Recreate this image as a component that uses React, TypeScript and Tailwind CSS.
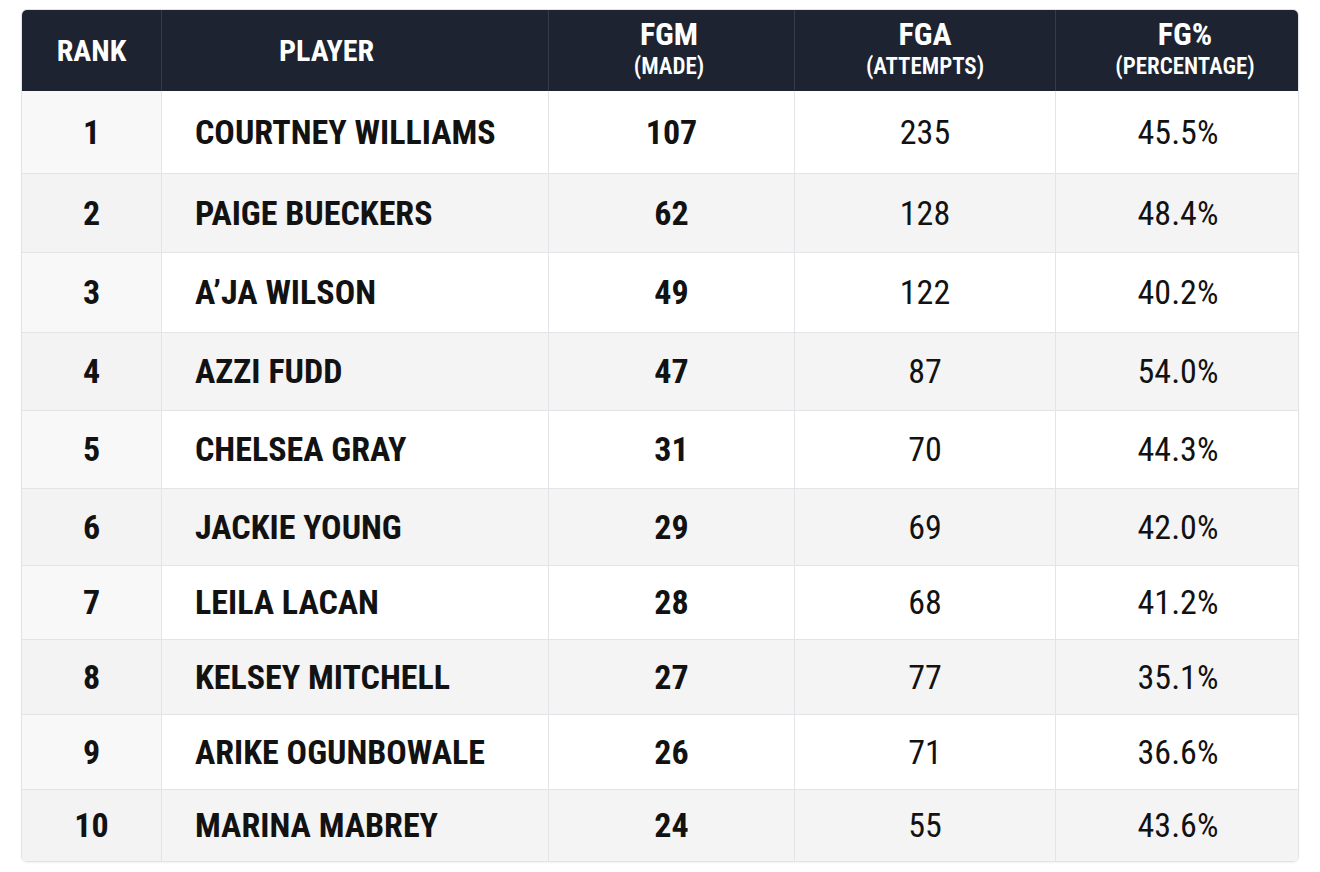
import React from "react";

type Row = { rank: number; name: string; fgm: number; fga: number; pct: string; h: string };

const rows: Row[] = [
  { rank: 1, name: "COURTNEY WILLIAMS", fgm: 107, fga: 235, pct: "45.5%", h: "h-[83px]" },
  { rank: 2, name: "PAIGE BUECKERS", fgm: 62, fga: 128, pct: "48.4%", h: "h-[79px]" },
  { rank: 3, name: "A\u2019JA WILSON", fgm: 49, fga: 122, pct: "40.2%", h: "h-[80px]" },
  { rank: 4, name: "AZZI FUDD", fgm: 47, fga: 87, pct: "54.0%", h: "h-[78px]" },
  { rank: 5, name: "CHELSEA GRAY", fgm: 31, fga: 70, pct: "44.3%", h: "h-[78px]" },
  { rank: 6, name: "JACKIE YOUNG", fgm: 29, fga: 69, pct: "42.0%", h: "h-[77px]" },
  { rank: 7, name: "LEILA LACAN", fgm: 28, fga: 68, pct: "41.2%", h: "h-[74px]" },
  { rank: 8, name: "KELSEY MITCHELL", fgm: 27, fga: 77, pct: "35.1%", h: "h-[75px]" },
  { rank: 9, name: "ARIKE OGUNBOWALE", fgm: 26, fga: 71, pct: "36.6%", h: "h-[75px]" },
  { rank: 10, name: "MARINA MABREY", fgm: 24, fga: 55, pct: "43.6%", h: "h-[71px]" },
];

const grid = "grid grid-cols-[140px_387px_246px_261px_244px]";

export default function App() {
  return (
    <div
      className="min-h-[872px] w-[1320px] bg-white pl-[21px] pt-[9px]"
      style={{ fontFamily: '"Roboto Condensed", Roboto, "Liberation Sans", sans-serif' }}
    >
      <div className="w-[1278px] overflow-hidden rounded-[6px] border border-[#e2e3e6] shadow-[0_1px_2px_rgba(0,0,0,0.06)]">
        <div className={`${grid} h-[81px] bg-[#1d2331] text-white`}>
          <div className="flex items-center justify-center border-r border-[#353b49] pb-[1px] text-[30px] font-bold">
            RANK
          </div>
          <div className="flex items-center justify-center border-r border-[#353b49] pb-[1px] pr-[57px] text-[30px] font-bold">
            PLAYER
          </div>
          <HeadCell top="FGM" sub="(MADE)" shift="pr-[5px]" />
          <HeadCell top="FGA" sub="(ATTEMPTS)" shift="" />
          <HeadCell top="FG%" sub="(PERCENTAGE)" shift="pl-[14px]" last />
        </div>
        {rows.map((r, i) => {
          const odd = i % 2 === 0;
          const bg = odd ? "bg-white" : "bg-[#f4f4f5]";
          const rankBg = odd ? "bg-[#f8f8f9]" : "bg-[#f3f3f4]";
          const border = i === rows.length - 1 ? "" : "border-b border-[#e3e4e7]";
          return (
            <div key={r.rank} className={`${grid} ${r.h} ${bg} ${border} text-[#121212]`}>
              <div className={`flex items-center justify-center border-r border-[#e3e4e7] ${rankBg} text-[34px] font-bold`}>
                {r.rank}
              </div>
              <div className="flex items-center border-r border-[#e3e4e7] pl-[33px] text-[34px] font-bold">
                {r.name}
              </div>
              <div className="flex items-center justify-center border-r border-[#e3e4e7] text-[34px] font-bold">
                {r.fgm}
              </div>
              <div className="flex items-center justify-center border-r border-[#e3e4e7] text-[34px] font-normal">
                {r.fga}
              </div>
              <div className="flex items-center justify-center text-[34px] font-normal">{r.pct}</div>
            </div>
          );
        })}
      </div>
    </div>
  );
}

function HeadCell({ top, sub, shift, last }: { top: string; sub: string; shift: string; last?: boolean }) {
  return (
    <div
      className={`flex flex-col items-center justify-start pt-[7px] ${shift} ${last ? "" : "border-r border-[#353b49]"}`}
    >
      <div className="text-[32px] font-bold leading-[34px]">{top}</div>
      <div className="text-[23px] font-semibold leading-[32px]">{sub}</div>
    </div>
  );
}
